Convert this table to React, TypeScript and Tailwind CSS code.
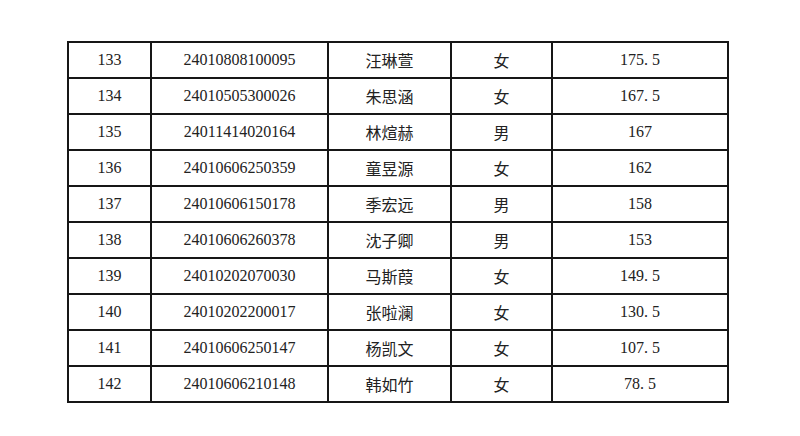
import React from "react";

interface Row {
    no: number;
    id: string;
    name: string;
    sex: string;
    score: string;
}

const rows: Row[] = [
    { no: 133, id: "24010808100095", name: "汪琳萱", sex: "女", score: "175.5" },
    { no: 134, id: "24010505300026", name: "朱思涵", sex: "女", score: "167.5" },
    { no: 135, id: "24011414020164", name: "林煊赫", sex: "男", score: "167" },
    { no: 136, id: "24010606250359", name: "童昱源", sex: "女", score: "162" },
    { no: 137, id: "24010606150178", name: "季宏远", sex: "男", score: "158" },
    { no: 138, id: "24010606260378", name: "沈子卿", sex: "男", score: "153" },
    { no: 139, id: "24010202070030", name: "马斯葭", sex: "女", score: "149.5" },
    { no: 140, id: "24010202200017", name: "张啦澜", sex: "女", score: "130.5" },
    { no: 141, id: "24010606250147", name: "杨凯文", sex: "女", score: "107.5" },
    { no: 142, id: "24010606210148", name: "韩如竹", sex: "女", score: "78.5" },
];

const cell = "border-2 border-[#161616] h-[36px] p-0 text-center align-middle";
const num = "font-['Liberation_Serif','Noto_Sans_CJK_SC',serif] text-[16px] text-[#222]";
const han = "font-['Noto_Sans_CJK_SC',sans-serif] text-[16px] text-[#222]";

// splits "175.5" so the dot gets the wide look of the source font
const Score: React.FC<{ value: string }> = ({ value }) => {
    const [a, b] = value.split(".");
    if (b === undefined) return <>{value}</>;
    return (
        <>
            {a}.<span className="ml-[4px]">{b}</span>
        </>
    );
};

const App: React.FC = () => {
    return (
        <div className="w-[800px] h-[436px] bg-white pt-[41px] pl-[67px]">
            <table className="table-fixed border-collapse w-[660px]">
                <colgroup>
                    <col className="w-[83px]" />
                    <col className="w-[177px]" />
                    <col className="w-[123px]" />
                    <col className="w-[101px]" />
                    <col className="w-[176px]" />
                </colgroup>
                <tbody>
                    {rows.map((r) => (
                        <tr key={r.no}>
                            <td className={`${cell} ${num}`}>{r.no}</td>
                            <td className={`${cell} ${num}`}>{r.id}</td>
                            <td className={`${cell} ${han}`}>{r.name}</td>
                            <td className={`${cell} ${han}`}>{r.sex}</td>
                            <td className={`${cell} ${num}`}>
                                <Score value={r.score} />
                            </td>
                        </tr>
                    ))}
                </tbody>
            </table>
        </div>
    );
};

export default App;
